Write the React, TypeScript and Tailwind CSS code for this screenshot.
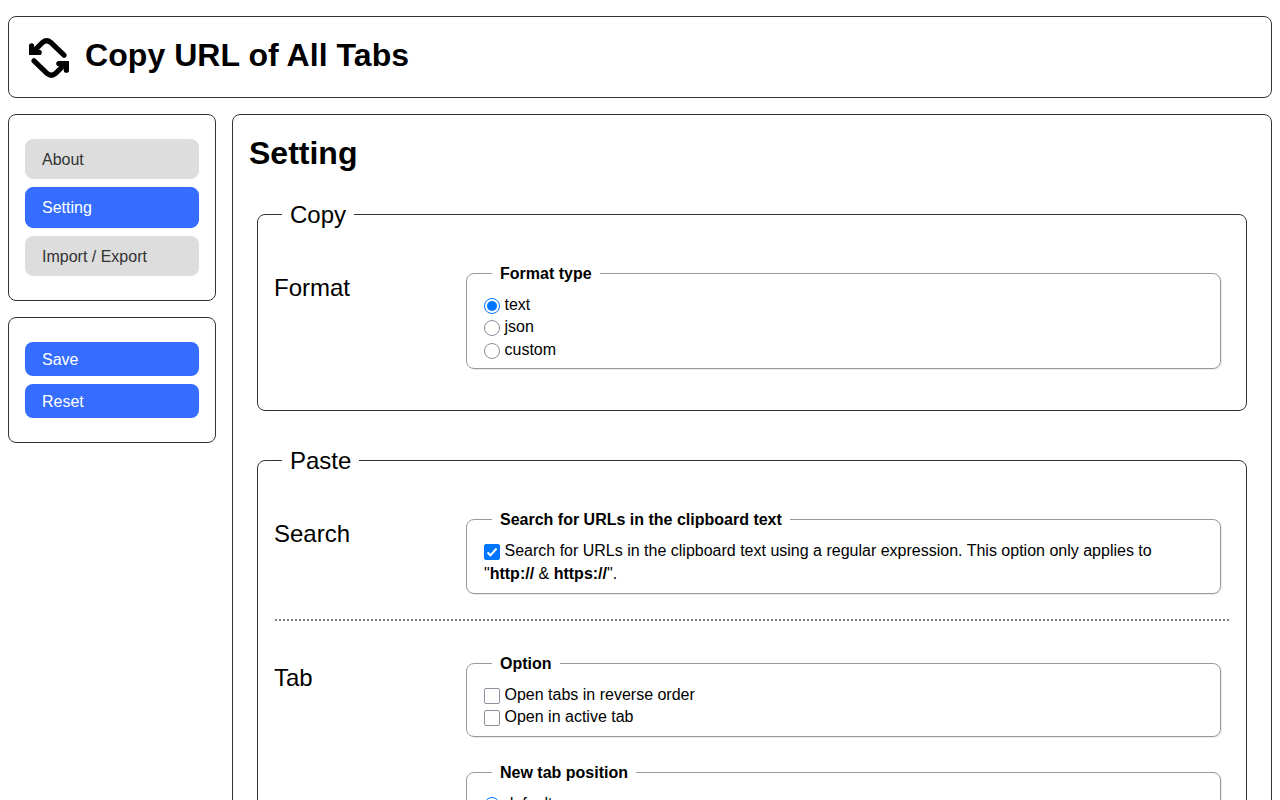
import type { ReactNode } from "react";

const radioBase = "mr-[4.5px] inline-block size-4 shrink-0 rounded-full border bg-white align-[-4px] ";
const boxBase = "mr-[4.5px] inline-block size-4 shrink-0 rounded-[2px] border align-[-4px] ";

function Radio({ checked = false, children }: { checked?: boolean; children: ReactNode }) {
  return (
    <label className="block">
      <span className={radioBase + (checked ? "border-[#0075ff] p-[2px]" : "border-[#8f8f9d]")}>
        {checked && <span className="block size-[10px] rounded-full bg-[#0075ff]" />}
      </span>
      {children}
    </label>
  );
}

function Check({ checked = false, children }: { checked?: boolean; children: ReactNode }) {
  return (
    <label className="block">
      <span className={boxBase + (checked ? "border-[#0075ff] bg-[#0075ff]" : "border-[#8f8f9d] bg-white")}>
        {checked && (
          <svg viewBox="0 0 14 14" className="block size-[14px]" fill="none" stroke="white" strokeWidth="2">
            <path d="M2.5 7.5 L5.4 10.3 L11.5 3.5" />
          </svg>
        )}
      </span>
      {children}
    </label>
  );
}

function Section({ title, children }: { title: string; children: ReactNode }) {
  return (
    <fieldset className="mx-2 rounded-lg border border-[#333] px-4 pb-4">
      <legend className="ml-2 px-2 text-2xl leading-[33.6px]">{title}</legend>
      {children}
    </fieldset>
  );
}

function Group({ title, padding = "pt-[9.8px] pb-[7px]", children }: { title: string; padding?: string; children: ReactNode }) {
  return (
    <fieldset className={"rounded-lg border border-[#999] px-[17px] shadow-[1px_1px_0_#ebebef] " + padding}>
      <legend className="ml-2 h-[22.4px] px-2 pt-px font-bold">{title}</legend>
      {children}
    </fieldset>
  );
}

function Row({ title, children }: { title: string; children: ReactNode }) {
  return (
    <div className="flex pt-[31px] pr-[9px] pb-[25px]">
      <h3 className="w-48 shrink-0 pt-[9px] text-2xl leading-[33.6px]">{title}</h3>
      <div className="flex min-w-0 grow flex-col gap-6">{children}</div>
    </div>
  );
}

function NavItem({ active = false, children }: { active?: boolean; children: ReactNode }) {
  return (
    <a
      className={
        "block rounded-lg border px-4 pt-[9px] pb-[7px] " +
        (active ? "border-[#346dff] bg-[#346dff] text-white" : "border-[#ddd] bg-[#ddd] text-[#333]")
      }
    >
      {children}
    </a>
  );
}

function ActionButton({ children }: { children: ReactNode }) {
  return (
    <button className="block h-[34px] w-full rounded-lg bg-[#346dff] px-[17px] pt-[2px] text-left leading-[18px] text-white">
      {children}
    </button>
  );
}

export default function App() {
  return (
    <div className="flex h-[800px] flex-col gap-4 overflow-hidden bg-white px-2 pt-4 font-['Liberation_Sans',Arial,sans-serif] text-base leading-[22.4px] text-black">
      <header className="flex h-[82px] shrink-0 gap-4 rounded-lg border border-[#333] py-4 pl-5">
        <svg viewBox="0 0 40 40" className="mt-[5px] size-10" fill="none" stroke="black" strokeWidth="5.2" strokeLinecap="round">
          <path d="M35 17.2 L21.8 4.4 Q17.7 1 13.6 4.4 L4 13.8" />
          <path d="M2.6 7.8 V14.4 H10.2" fill="black" />
          <path d="M5 22.8 L18.2 35.6 Q22.3 39 26.4 35.6 L36 26.2" />
          <path d="M29.8 25.6 H37.4 V32.2" fill="black" />
        </svg>
        <h1 className="text-[32px] leading-[44.8px] font-bold tracking-[0.06px]">Copy URL of All Tabs</h1>
      </header>
      <div className="flex items-start gap-4">
        <aside className="flex w-52 shrink-0 flex-col gap-4">
          <nav className="flex flex-col gap-2 rounded-lg border border-[#333] px-4 py-6">
            <NavItem>About</NavItem>
            <NavItem active>Setting</NavItem>
            <NavItem>Import / Export</NavItem>
          </nav>
          <div className="flex flex-col gap-2 rounded-lg border border-[#333] px-4 py-6">
            <ActionButton>Save</ActionButton>
            <ActionButton>Reset</ActionButton>
          </div>
        </aside>
        <main className="min-w-0 grow rounded-lg border border-[#333] p-4">
          <h2 className="mb-[22px] text-[32px] leading-[44.8px] font-bold">Setting</h2>
          <div className="flex flex-col gap-[32.6px]">
            <Section title="Copy">
              <Row title="Format">
                <Group title="Format type" padding="pt-[9px] pb-[7px]">
                  <Radio checked>text</Radio>
                  <Radio>json</Radio>
                  <Radio>custom</Radio>
                </Group>
              </Row>
            </Section>
            <Section title="Paste">
              <Row title="Search">
                <Group title="Search for URLs in the clipboard text" padding="pt-[9.8px] pb-[7.7px]">
                  <Check checked>
                    Search for URLs in the clipboard text using a regular expression. This option only applies to "
                    <b>http://</b> &amp; <b>https://</b>".
                  </Check>
                </Group>
              </Row>
              <div className="mx-px mt-[0.2px] mb-[-0.2px] border-t-2 border-dotted border-[#808080]" />
              <Row title="Tab">
                <Group title="Option">
                  <Check>Open tabs in reverse order</Check>
                  <Check>Open in active tab</Check>
                </Group>
                <Group title="New tab position">
                  <Radio checked>default</Radio>
                  <Radio>first</Radio>
                  <Radio>last</Radio>
                </Group>
              </Row>
            </Section>
          </div>
        </main>
      </div>
    </div>
  );
}
